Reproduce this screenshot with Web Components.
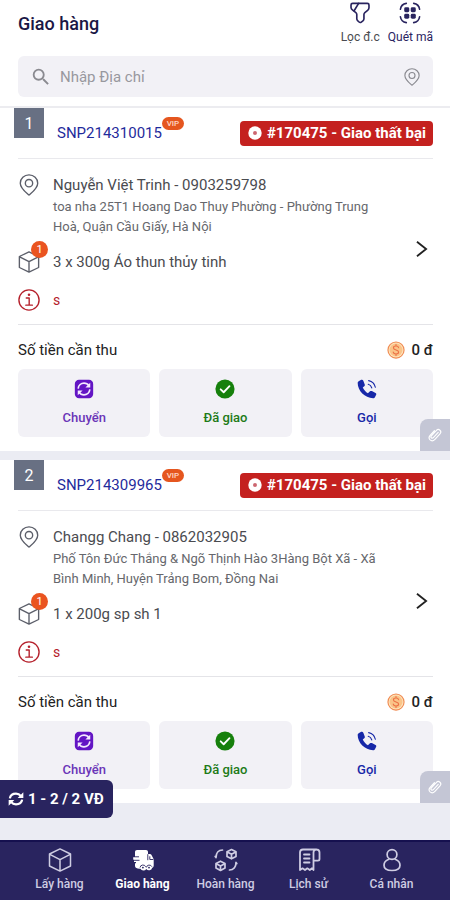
<!DOCTYPE html>
<html lang="vi">
<head>
<meta charset="utf-8">
<meta name="viewport" content="width=device-width, initial-scale=1">
<title>Giao hàng</title>
<style>
  html { background: #ebecf1; }
  body { margin: 0; font-family: Roboto, "Noto Sans", sans-serif; color: #4a4b50; }
</style>
</head>
<body>
<delivery-page>
  <page-header slot="header"></page-header>
  <delivery-card number="1" code="SNP214310015" status="#170475 - Giao thất bại" amount="0 đ" count="1">
    <span slot="name">Nguyễn Việt Trinh - 0903259798</span>
    <span slot="address">toa nha 25T1 Hoang Dao Thuy Phường - Phường Trung Hoà, Quận Cầu Giấy, Hà Nội</span>
    <span slot="product">3 x 300g Áo thun thủy tinh</span>
    <span slot="note">s</span>
  </delivery-card>
  <delivery-card number="2" code="SNP214309965" status="#170475 - Giao thất bại" amount="0 đ" count="1">
    <span slot="name">Changg Chang - 0862032905</span>
    <span slot="address">Phố Tôn Đức Thắng &amp; Ngõ Thịnh Hào 3Hàng Bột Xã - Xã Bình Minh, Huyện Trảng Bom, Đồng Nai</span>
    <span slot="product">1 x 200g sp sh 1</span>
    <span slot="note">s</span>
  </delivery-card>
  <bottom-bar slot="footer">
    <nav-item icon="box">Lấy hàng</nav-item>
    <nav-item icon="truck" active>Giao hàng</nav-item>
    <nav-item icon="return">Hoàn hàng</nav-item>
    <nav-item icon="receipt">Lịch sử</nav-item>
    <nav-item icon="person">Cá nhân</nav-item>
  </bottom-bar>
</delivery-page>

<script>
const stroke = (w, d) => `<g fill="none" stroke="currentColor" stroke-width="${w}" stroke-linecap="round" stroke-linejoin="round">${d}</g>`;
const ICONS = {
  filter: stroke(1.8, '<path d="M4 1.500h16c1.200 0 1.800 .7 1.800 1.800v3c0 1.200-.6 2-1.500 2.800l-3 2.400c-.7 .6-1 1.200-1 2.200v4.600c0 1-.3 1.600-1.100 2.200l-1.800 1.400c-.9 .7-1.600 .7-2.400-.1l-1.600-1.500c-.6-.6-.9-1.200-.9-2v-4.600c0-1-.3-1.600-1-2.200l-3.500-2.700C2.900 8 2.200 7.200 2.200 6V3.300c0-1.100 .6-1.800 1.800-1.800z"/><path d="M10.500 1.500 5.600 9.500"/>'),
  scan: stroke(1.7, '<path d="M1.500 8C2 4.500 4.500 2 8 1.500M16 1.500c3.500 .5 6 3 6.500 6.500M22.500 16c-.5 3.500-3 6-6.500 6.500M8 22.500C4.500 22 2 19.500 1.500 16"/>') + '<g fill="currentColor"><rect x="5.700" y="5.700" width="5.500" height="5.500" rx="1.600"/><rect x="12.800" y="5.700" width="5.500" height="5.500" rx="1.600"/><rect x="5.700" y="12.800" width="5.500" height="5.500" rx="1.600"/><rect x="12.800" y="12.800" width="5.500" height="5.500" rx="1.600"/></g>',
  search: '<path fill="currentColor" d="M15.500 14h-.79l-.28-.27A6.470 6.470 0 0 0 16 9.500 6.500 6.500 0 1 0 9.500 16c1.610 0 3.090-.59 4.230-1.570l.27 .28v.79l5 4.990L20.490 19l-4.990-5zm-6 0C7.010 14 5 11.990 5 9.500S7.010 5 9.500 5 14 7.010 14 9.500 11.990 14 9.500 14z"/>',
  pin: stroke(1.5, '<path d="M12 23C8 19.500 2.500 15.500 2.500 10a9.500 9 0 0 1 19 0c0 5.500-5.500 9.500-9.500 13z"/><circle cx="12" cy="10" r="4"/>'),
  box: stroke(1.5, '<path d="M12 .9 22.500 6v12L12 23.100 1.500 18V6zM1.800 6.300 12 11.700l10.200-5.400M12 11.700V23"/>'),
  info: stroke(1.5, '<circle cx="12" cy="12" r="11"/><path d="M9 9.800h3.200v7.700M8.500 17.600h7.200"/>') + '<circle cx="12" cy="6.300" r="1.400" fill="currentColor"/>',
  disc: '<circle cx="12" cy="12" r="11.500" fill="#fff"/><circle cx="12" cy="12" r="3.400" fill="#cc6670"/>',
  chevron: '<path fill="none" stroke="currentColor" stroke-width="2" d="M6.500 4 16.500 12 6.500 20"/>',
  coin: '<circle cx="12" cy="12" r="11.500" fill="#f08a50"/><circle cx="12" cy="12" r="10" fill="#fde3bd"/><circle cx="12" cy="12" r="8.600" fill="#fac488"/><path fill="none" stroke="#ec7045" stroke-width="1.500" stroke-linecap="round" d="M15.500 9c-.3-1.500-1.600-2.300-3.500-2.300S8.600 7.600 8.600 9.200c0 3.700 6.900 1.800 6.900 5.500 0 1.600-1.500 2.600-3.500 2.600s-3.400-.9-3.700-2.500M12 4.800v1.900M12 17.300v1.900"/>',
  swap: '<rect x="1" y="1" width="22" height="22" rx="5" fill="#6315c4"/><g fill="none" stroke="#f4eaff" stroke-width="2"><path d="M5 11.500C5.300 7.500 8.500 5 12 5c2.500 0 4.500 1 5.800 3M19 12.500C18.700 16.500 15.500 19 12 19c-2.500 0-4.500-1-5.800-3"/></g><path fill="#f4eaff" d="M19.500 4.500v5.800h-5.800zM4.500 19.500v-5.800h5.800z"/>',
  check: '<circle cx="12" cy="12" r="11.500" fill="#16800c"/><path fill="none" stroke="#fff" stroke-width="2.200" stroke-linecap="round" stroke-linejoin="round" d="m6.800 12.400 3.600 3.500 7-7.300"/>',
  call: '<path fill="currentColor" d="M2 2.600 5 1c1.200-.5 2.100-.1 2.600 1l1.700 4.600c.3 .8 0 1.600-.6 2.100L6.900 10.200c1.500 3 3.500 5.300 6.200 6.900l2.500-2.300c.6-.6 1.500-.7 2.300-.3l4.300 2.200c.9 .5 1.200 1.300 .8 2.200l-1.500 2.900c-.5 .9-1.200 1.200-2.200 1.200C9.500 22.800 .8 14.500 .8 4.600c0-1 .4-1.600 1.200-2z"/>' + stroke(1.400, '<path d="M13.500 6.300c2 .5 3.600 2.100 4.200 4.300M14 1.900c4 .8 7.200 4 8 8"/>'),
  clip: stroke(2, '<path d="m17.500 7.500-8.300 9c-1 1.100-2.600 1.200-3.500 .3s-.9-2.300 .1-3.400l8.400-9c1.700-1.900 4.400-2.200 6.200-.6 1.900 1.700 1.800 4.400 .1 6.300l-8.600 9.300c-2.600 2.700-6 3.100-8.300 1-2.300-2.200-2.100-5.500 .4-8.200L11 4.700"/>'),
  refresh: '<g fill="none" stroke="currentColor" stroke-width="3.400"><path d="M2.800 11C3.500 6.500 7.300 4 12 4c3 0 5.500 1.200 7.200 3.300M21.200 13c-.7 4.500-4.500 7-9.200 7-3 0-5.500-1.200-7.200-3.300"/></g><path fill="currentColor" d="M23 2v8.500h-8.500zM1 22v-8.500h8.500z"/>',
  truck: '<path fill="currentColor" d="M4 4c0-1.200 .8-2 2-2h9c1.200 0 2 .8 2 2v2h1.500c.9 0 1.500 .3 2 1.100l1.800 3.500c.3 .6 .4 1 .4 1.600v5.300c0 1.200-.6 2-1.500 2.200a3.300 3.300 0 0 1-5.900 1.200 3.400 3.400 0 0 1-5.900-.2c-2.500 .3-5.400-.4-5.400-2.700v-2.800h1v-1.300H3v-2.200H2.200V9.200H4z"/><g fill="none" stroke="#29245f" stroke-width=".9"><path d="M16.800 6.200v6M18.800 8.300v3.200h3.500M2.500 12.300h6M4 8.800h4M9 19.500a3 3 0 0 1 5.700-.7M15.300 19.500a3 3 0 0 1 5.600-.8"/></g><g fill="#29245f"><circle cx="11.900" cy="19.600" r=".9"/><circle cx="18" cy="19.600" r=".9"/></g>',
  return: stroke(1.7, '<path d="M2 9.500C2 5 4.500 2 8.500 2M22 14.500c0 4.500-2.500 7.500-6.500 7.500M2 9.500l-.8-1M22 14.500l.8 1"/><path d="m17.500 1.500 4.500 2.200v4.700l-4.500 2.400L13 8.400V3.700zM13.300 4l4.200 2.200L21.700 4M17.500 6.200v4.600M6.500 13.200l4.500 2.200v4.700l-4.500 2.400L2 20.100v-4.700zM2.300 15.700l4.200 2.200 4.200-2.200M6.500 17.900v4.600"/>'),
  receipt: stroke(1.8, '<path d="M19.500 1.500H6C4 1.500 3 2.700 3 4.500V22l2.500-1.700L8 22l2.300-1.700 2.500 1.700 2.200-1.700 1.500 1.700V4.500c0-2 1-3 2.800-3s3.200 1.200 3.200 3V11c0 1-.6 1.600-1.600 1.600h-4.200M7 6.500h5.500M7 10.500h5.500M7 14.500h5.500"/>'),
  person: stroke(1.7, '<circle cx="12" cy="6.500" r="4.900"/><path d="M8.800 11.200C6 12.200 4 14.500 4 17.200c0 3.200 3 5.300 8 5.300s8-2.100 8-5.300c0-2.700-2-5-4.800-6"/>')
};

const RESET = `
  *, *::before, *::after { box-sizing: border-box; }
  button { font: inherit; color: inherit; background: none; border: 0; padding: 0; margin: 0; cursor: pointer; }
  a { color: inherit; text-decoration: none; }
`;
const define = (name, render) => customElements.define(name, class extends HTMLElement {
  constructor() {
    super();
    this.attachShadow({ mode: 'open' });
  }
  connectedCallback() {
    const t = document.createElement('template');
    t.innerHTML = render(this);
    this.shadowRoot.replaceChildren(t.content.cloneNode(true));
  }
});

define('app-icon', el => `
  <style>
    :host { display: inline-block; flex: none; width: 22px; height: 22px; }
    svg { display: block; width: 100%; height: 100%; }
  </style>
  <svg viewBox="0 0 24 24" aria-hidden="true">${ICONS[el.getAttribute('name')]}</svg>`);

define('page-header', () => `
  <style>${RESET}
    :host { display: block; padding: 0 17px 9px 18px; background: #fff; border-bottom: 2px solid #ececf0; }
    .top { display: flex; justify-content: space-between; height: 56px; }
    h1 { margin: 0; padding-top: 12px; font-size: 18px; line-height: 24px; font-weight: 500; color: #1b1745; }
    .tools { display: flex; gap: 8px; }
    .tools button { display: flex; flex-direction: column; align-items: center; justify-content: flex-start; gap: 5px; padding-top: 2px; font-size: 12px; line-height: 16px; }
    .tools app-icon { color: #29245f; }
    .tools .dark { color: #29245f; }
    .search { display: flex; align-items: center; gap: 8px; height: 41px; padding: 0 12px; border-radius: 6px; background: #f2f1f6; color: #8a8a90; }
    .search app-icon { width: 20px; height: 20px; }
    .search .find { width: 22px; height: 22px; }
    .search button { display: flex; }
    .search button app-icon { width: 18px; height: 18px; }
    input { flex: 1; min-width: 0; border: 0; padding: 0; background: none; font: inherit; font-size: 15px; color: inherit; outline: 0; }
    input::placeholder { color: #98989e; opacity: 1; }
  </style>
  <div class="top">
    <h1>Giao hàng</h1>
    <div class="tools">
      <button type="button"><app-icon name="filter"></app-icon>Lọc đ.c</button>
      <button type="button" class="dark"><app-icon name="scan"></app-icon>Quét mã</button>
    </div>
  </div>
  <div class="search">
    <app-icon class="find" name="search"></app-icon>
    <input type="text" placeholder="Nhập Địa chỉ" aria-label="Nhập Địa chỉ">
    <button type="button" aria-label="Vị trí"><app-icon name="pin"></app-icon></button>
  </div>`);

define('action-button', el => `
  <style>${RESET}
    :host { display: block; flex: 1; }
    button { display: flex; flex-direction: column; align-items: center; gap: 10px; width: 100%; height: 68px; padding-top: 10px; border-radius: 6px; background: #f2f1f6; font-size: 13px; line-height: 18px; font-weight: 500; }
    app-icon { width: 20px; height: 20px; }
  </style>
  <button type="button"><app-icon name="${el.getAttribute('icon')}"></app-icon><slot></slot></button>`);

define('delivery-card', el => `
  <style>${RESET}
    :host { display: block; position: relative; padding: 0 17px 14px 18px; background: #fff; }
    header { display: flex; align-items: center; height: 51px; border-bottom: 1px solid #e9e9ed; }
    .num { align-self: flex-start; width: 30px; height: 30px; margin-left: -4px; background: #687083; color: #fff; font-size: 16px; line-height: 32px; text-align: center; }
    .code { position: relative; margin-left: 13px; font-size: 15px; line-height: 20px; color: #1f2b9c; }
    .vip { position: absolute; left: 100%; top: -6px; width: 22px; height: 13px; border-radius: 7px; background: #e5561f; color: #ffd9c8; font-size: 8px; line-height: 13px; font-weight: 500; text-align: center; }
    .status { display: flex; align-items: center; gap: 5px; margin-left: auto; padding: 0 7px 0 8px; border-radius: 4px; background: #c4211f; color: #fff; font-size: 15px; line-height: 25px; font-weight: 700; }
    .status app-icon { width: 14px; height: 14px; }
    .body { display: grid; grid-template-columns: 22px 1fr 24px; column-gap: 13px; padding: 15px 0 13px; border-bottom: 1px solid #e4e4e8; }
    .body > app-icon, .goods app-icon { color: #5c5f6a; }
    .name { margin-bottom: 1px; font-size: 15px; line-height: 22px; }
    .address { font-size: 13px; line-height: 20px; color: #66676c; }
    .goods { position: relative; height: 22px; margin-top: 14px; }
    .count { position: absolute; left: 13px; top: -10px; width: 17px; height: 17px; border-radius: 50%; background: #ea5420; color: #fff; font-size: 11px; line-height: 18px; text-align: center; }
    .product { margin-top: 14px; font-size: 15px; line-height: 22px; }
    .body .info { margin-top: 16px; color: #b5202b; }
    .note { margin-top: 16px; font-size: 14px; line-height: 22px; color: #b5202b; }
    .open { grid-column: 3; grid-row: 1 / span 4; align-self: center; justify-self: end; height: 24px; margin-top: 12px; }
    .open app-icon { display: block; color: #222; }
    .total { display: flex; align-items: center; height: 44px; padding-top: 5px; color: #222; font-size: 15px; line-height: 22px; }
    .coin { width: 18px; height: 18px; margin: 0 7px 0 auto; }
    .amount { font-weight: 500; }
    .actions { display: flex; gap: 9px; }
    .clip { position: absolute; right: 0; bottom: 0; display: flex; align-items: center; justify-content: center; width: 30px; height: 32px; border-radius: 8px 0 0 0; background: #c4c6d5; color: #fff; }
    .clip app-icon { width: 14px; height: 14px; }
  </style>
  <header>
    <div class="num">${el.getAttribute('number')}</div>
    <a class="code" href="#">${el.getAttribute('code')}<span class="vip">VIP</span></a>
    <div class="status"><app-icon name="disc"></app-icon>${el.getAttribute('status')}</div>
  </header>
  <div class="body">
    <app-icon name="pin"></app-icon>
    <div>
      <div class="name"><slot name="name"></slot></div>
      <div class="address"><slot name="address"></slot></div>
    </div>
    <div class="goods"><app-icon name="box"></app-icon><span class="count">${el.getAttribute('count')}</span></div>
    <div class="product"><slot name="product"></slot></div>
    <app-icon class="info" name="info"></app-icon>
    <div class="note"><slot name="note"></slot></div>
    <button class="open" type="button" aria-label="Chi tiết"><app-icon name="chevron"></app-icon></button>
  </div>
  <div class="total">Số tiền cần thu<app-icon class="coin" name="coin"></app-icon><span class="amount">${el.getAttribute('amount')}</span></div>
  <div class="actions">
    <action-button icon="swap" style="color:#6a35b8">Chuyển</action-button>
    <action-button icon="check" style="color:#217a16">Đã giao</action-button>
    <action-button icon="call" style="color:#1728a8">Gọi</action-button>
  </div>
  <button class="clip" type="button" aria-label="Đính kèm"><app-icon name="clip"></app-icon></button>`);

define('nav-item', el => `
  <style>${RESET}
    :host { display: block; flex: 1; color: #cfcde3; }
    :host([active]) { color: #fff; }
    a { display: flex; flex-direction: column; align-items: center; gap: 4px; padding-top: 6px; font-size: 12px; line-height: 16px; font-weight: 500; white-space: nowrap; }
    :host([active]) a { font-weight: 700; }
    app-icon { width: 24px; height: 24px; }
  </style>
  <a href="#"><app-icon name="${el.getAttribute('icon')}"></app-icon><slot></slot></a>`);

define('bottom-bar', () => `
  <style>${RESET}
    :host { display: block; position: sticky; bottom: 0; }
    nav { display: flex; height: 60px; padding: 0 17px 0 18px; background: #29245f; border-top: 2px solid #15104f; }
    .pager { position: absolute; left: 0; bottom: 82px; display: flex; align-items: center; gap: 4px; height: 38px; padding: 0 9px 0 8px; border-radius: 0 6px 6px 0; background: #29245f; color: #fff; font-size: 15px; font-weight: 700; }
    .pager app-icon { width: 16px; height: 16px; }
  </style>
  <button class="pager" type="button"><app-icon name="refresh"></app-icon>1 - 2 / 2 VĐ</button>
  <nav><slot></slot></nav>`);

define('delivery-page', () => `
  <style>
    :host { display: flex; flex-direction: column; min-height: 100vh; }
    main { flex: 1; display: flex; flex-direction: column; gap: 9px; padding-bottom: 36px; background: #ebecf3; }
  </style>
  <slot name="header"></slot>
  <main><slot></slot></main>
  <slot name="footer"></slot>`);
</script>
</body>
</html>
